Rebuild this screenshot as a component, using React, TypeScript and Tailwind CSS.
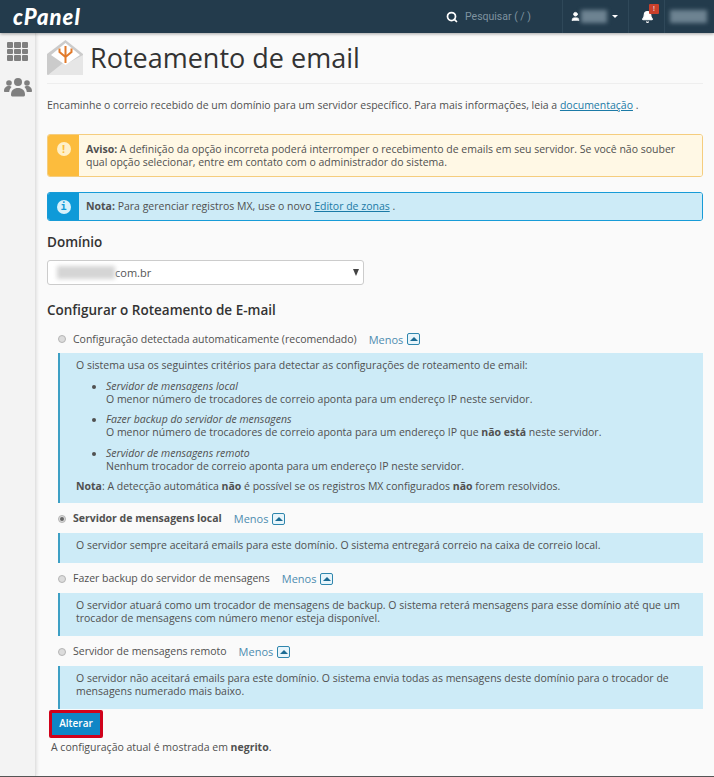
import { Search, User, Bell } from 'lucide-react';
import { ReactNode } from 'react';

const Menos = () => (
  <span className="ml-[12px] flex items-center gap-[4px] text-[#4d8cb0] text-[11px]">
    Menos
    <span className="w-[13px] h-[12px] border-[1.5px] border-[#2f86ad] bg-[#e8f5fb] rounded-[2px] flex items-center justify-center">
      <span className="w-0 h-0 border-x-[4px] border-x-transparent border-b-[4px] border-b-[#1b6b93]" />
    </span>
  </span>
);

const Radio = ({ checked = false }: { checked?: boolean }) => (
  <span className="w-[8px] h-[8px] rounded-full bg-[#dcdcdc] border border-[#b5b5b5] flex items-center justify-center shrink-0">
    {checked && <span className="w-[4px] h-[4px] rounded-full bg-[#666]" />}
  </span>
);

interface OptionProps {
  label: ReactNode;
  checked?: boolean;
  children: ReactNode;
}

const Option = ({ label, checked, children }: OptionProps) => (
  <div>
    <div className="flex items-center h-[20px] pl-[11px]">
      <Radio checked={checked} />
      <span className="ml-[7px]">{label}</span>
      <Menos />
    </div>
    <div className="ml-[11px] mt-[4px] bg-[#cdebf7] border-l-[2px] border-[#3d9fc4] pl-[16px] pr-[8px] pt-[6px] pb-[11px]">
      {children}
    </div>
  </div>
);

const Criteria = ({ title, children }: { title: string; children: ReactNode }) => (
  <li className="list-disc ml-[30px] mt-[7.67px]">
    <i>{title}</i>
    <br />
    {children}
  </li>
);

export default function App() {
  return (
    <div className="w-[714px] h-[777px] overflow-hidden flex flex-col bg-[#fafafa] text-[#505050] text-[10.5px] leading-[13px] font-['Open_Sans',sans-serif]">
      <header className="h-[33px] shrink-0 bg-[#233b4c] flex items-center shadow-[0_1px_3px_rgba(0,0,0,0.35)] z-10">
        <span className="ml-[13px] text-white text-[22px] leading-[33px] font-black italic tracking-[1px] font-['Lato',sans-serif]">cPanel</span>
        <div className="ml-auto flex items-center h-full">
          <Search className="w-[12px] h-[12px] text-white" strokeWidth={3.5} />
          <span className="ml-[7px] w-[97px] text-[#7f93a0] text-[10.5px] font-['Roboto',sans-serif]">Pesquisar ( / )</span>
          <div className="h-full w-[66px] border-l border-[#2f4859] flex items-center pl-[7px]">
            <User className="w-[11px] h-[11px] text-white fill-white" />
            <span className="w-[26px] h-[13px] bg-[#6d8391] blur-[2px]" />
            <span className="ml-[5px] w-0 h-0 border-x-[3.5px] border-x-transparent border-t-[3px] border-t-white" />
          </div>
          <div className="h-full w-[37px] border-x border-[#2f4859] flex items-center pl-[12px] relative">
            <Bell className="w-[13px] h-[14px] text-white fill-white" />
            <span className="absolute left-[20px] top-[4px] w-[10px] h-[10px] bg-[#c9402c] rounded-[1px] text-white text-[7px] leading-[10px] text-center">!</span>
          </div>
          <div className="w-[49px] pl-[5px]">
            <div className="w-[37px] h-[13px] bg-[#6d8391] blur-[2px]" />
          </div>
        </div>
      </header>
      <div className="flex flex-1 min-h-0">
        <aside className="w-[36px] shrink-0 bg-[#f3f3f3] border-r border-[#e2e2e2] shadow-[1px_0_3px_rgba(0,0,0,0.1)] flex flex-col items-center pt-[9px]">
          <div className="grid grid-cols-3 gap-[1px] w-[22px] h-[19px]">
            {Array.from({ length: 9 }).map((_, i) => (
              <span key={i} className="bg-[#7f7f7f] rounded-[1px]" />
            ))}
          </div>
          <svg viewBox="0 0 28 20" className="w-[28px] h-[20px] mt-[16px]" fill="#7f7f7f">
            <circle cx="14" cy="5" r="4" />
            <circle cx="5" cy="6" r="2.8" />
            <circle cx="23" cy="6" r="2.8" />
            <path d="M7 18c0-5 3-7 7-7s7 2 7 7c0 1-1 1.500-2 1.500H9c-1 0-2-.5-2-1.500z" />
            <path d="M0 14c0-3 2-5 5-5 1 0 2 .3 2.500 1C6 11.500 5.500 13 5.200 15H1c-.6 0-1-.4-1-1zM28 14c0-3-2-5-5-5-1 0-2 .3-2.500 1 1.500 1.500 2 3 2.300 5H27c.6 0 1-.4 1-1z" />
          </svg>
        </aside>
        <main className="flex-1 pl-[11px] pr-[11px] min-w-0">
          <div className="flex items-center gap-[7px] pt-[7px] pb-[7px] border-b border-[#eee]">
            <svg viewBox="0 0 36 36" className="w-[36px] h-[36px] shrink-0">
              <path d="M0 14 18.500 0 36 14v20a1 1 0 0 1-1 1H1a1 1 0 0 1-1-1z" fill="#cbcbcb" />
              <path d="M1 35 16 23h5l15-8v20z" fill="#e6e6e6" />
              <path d="M18.500 3 33 15 18.500 25 4 15z" fill="#fff" />
              <path d="M18.500 23V6M12.500 8.500V12l6 5M24.500 8.500V12l-6 5" fill="none" stroke="#e27a2a" strokeWidth="2" />
            </svg>
            <h1 className="text-[27px] leading-[36px] text-[#333]">Roteamento de email</h1>
          </div>
          <p className="mt-[15px]">
            Encaminhe o correio recebido de um domínio para um servidor específico. Para mais informações, leia a{' '}
            <a className="text-[#1b7aa6] underline">documentação</a> .
          </p>
          <div className="mt-[22px] flex border border-[#f5cd7e] rounded-[3px] overflow-hidden h-[43px]">
            <div className="w-[31px] bg-[#fcbc3d] flex justify-center pt-[7px]">
              <span className="w-[14px] h-[14px] rounded-full bg-[#fff0c8] text-[#fcbc3d] text-[11px] leading-[14px] font-bold text-center">!</span>
            </div>
            <div className="flex-1 bg-[#fff8e5] pl-[7px] pr-[12px] pt-[8px]">
              <b>Aviso:</b> A definição da opção incorreta poderá interromper o recebimento de emails em seu servidor. Se você não souber qual opção selecionar, entre em contato com o administrador do sistema.
            </div>
          </div>
          <div className="mt-[15px] flex border border-[#179bd7] rounded-[3px] overflow-hidden h-[29px]">
            <div className="w-[31px] bg-[#0f9ad8] flex justify-center items-center">
              <span className="w-[14px] h-[14px] rounded-full bg-[#d8f1fb] text-[#0f9ad8] text-[10px] leading-[14px] font-bold text-center font-['DejaVu_Sans_Mono',monospace]">i</span>
            </div>
            <div className="flex-1 bg-[#cdebf7] pl-[7px] flex items-center">
              <span>
                <b>Nota:</b> Para gerenciar registros MX, use o novo{' '}
                <a className="text-[#1b7aa6] underline">Editor de zonas</a> .
              </span>
            </div>
          </div>
          <h2 className="mt-[11px] text-[13.5px] leading-[20px] font-semibold text-[#333]">Domínio</h2>
          <div className="mt-[8px] w-[317px] h-[25px] border border-[#ccc] rounded-[3px] bg-white flex items-center relative">
            <span className="ml-[9px] w-[58px] h-[13px] bg-[#d5d5d5] blur-[2px]" />
            <span className="text-[#555] text-[11px]">com.br</span>
            <span className="absolute right-[4px] top-[8px] w-0 h-0 border-x-[3.5px] border-x-transparent border-t-[7px] border-t-[#444]" />
          </div>
          <h2 className="mt-[15px] text-[13.5px] leading-[20px] font-semibold text-[#333]">Configurar o Roteamento de E-mail</h2>
          <div className="mt-[9px] flex flex-col gap-[6px]">
            <Option label="Configuração detectada automaticamente (recomendado)">
              <p>O sistema usa os seguintes critérios para detectar as configurações de roteamento de email:</p>
              <ul>
                <Criteria title="Servidor de mensagens local">O menor número de trocadores de correio aponta para um endereço IP neste servidor.</Criteria>
                <Criteria title="Fazer backup do servidor de mensagens">
                  O menor número de trocadores de correio aponta para um endereço IP que <b>não está</b> neste servidor.
                </Criteria>
                <Criteria title="Servidor de mensagens remoto">Nenhum trocador de correio aponta para um endereço IP neste servidor.</Criteria>
              </ul>
              <p className="mt-[7px] -mb-[1px]">
                <b>Nota</b>: A detecção automática <b>não</b> é possível se os registros MX configurados <b>não</b> forem resolvidos.
              </p>
            </Option>
            <Option checked label={<b>Servidor de mensagens local</b>}>
              <p>O servidor sempre aceitará emails para este domínio. O sistema entregará correio na caixa de correio local.</p>
            </Option>
            <Option label="Fazer backup do servidor de mensagens">
              <p>O servidor atuará como um trocador de mensagens de backup. O sistema reterá mensagens para esse domínio até que um trocador de mensagens com número menor esteja disponível.</p>
            </Option>
            <Option label="Servidor de mensagens remoto">
              <p>O servidor não aceitará emails para este domínio. O sistema envia todas as mensagens deste domínio para o trocador de mensagens numerado mais baixo.</p>
            </Option>
          </div>
          <button className="block mt-[1px] ml-[2px] w-[54px] h-[28px] bg-[#0f86c6] border-[3px] border-[#d0021b] rounded-[2px] text-white text-[10px] font-semibold">Alterar</button>
          <p className="mt-[3px] ml-[4px]">A configuração atual é mostrada em <b>negrito</b>.</p>
        </main>
      </div>
      <div className="h-[1px] shrink-0 bg-[#555]" />
    </div>
  );
}
